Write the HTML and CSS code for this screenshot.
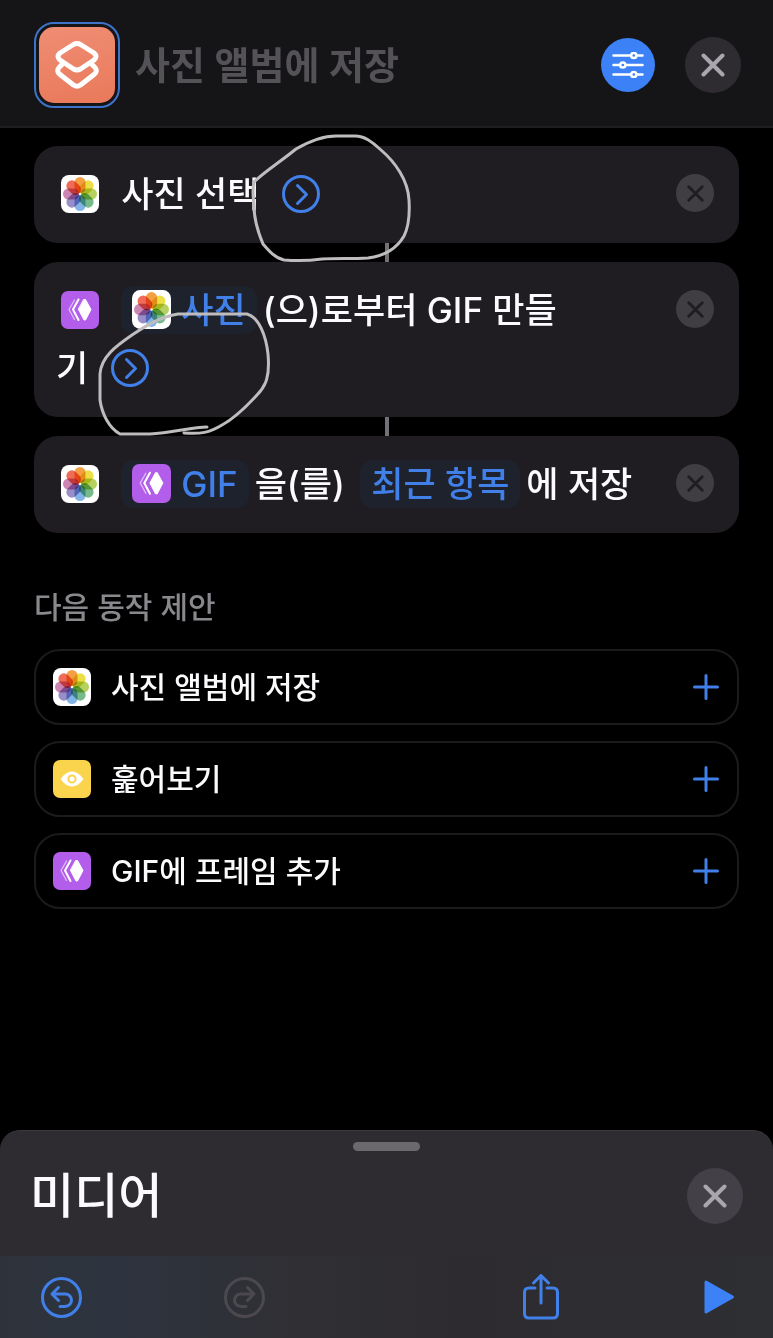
FILE: index.html
```html
<!DOCTYPE html>
<html lang="ko">
<head>
  <meta charset="UTF-8" />
  <meta name="viewport" content="width=device-width, initial-scale=1" />
  <title>사진 앨범에 저장</title>
  <link rel="stylesheet" href="styles.css">
</head>
<body>
  <!-- Shared icons -->
  <svg class="sprite" aria-hidden="true">
    <symbol id="photos" viewBox="0 0 38 38">
      <rect width="38" height="38" rx="8" fill="#fff" />
      <g class="petals">
        <rect x="13.500" y="2" width="11" height="16" rx="5.500" fill="#f3a043" />
        <rect x="13.500" y="2" width="11" height="16" rx="5.500" fill="#ecdf45" transform="rotate(45 19 19)" />
        <rect x="13.500" y="2" width="11" height="16" rx="5.500" fill="#b5d160" transform="rotate(90 19 19)" />
        <rect x="13.500" y="2" width="11" height="16" rx="5.500" fill="#76ba8c" transform="rotate(135 19 19)" />
        <rect x="13.500" y="2" width="11" height="16" rx="5.500" fill="#82b4e8" transform="rotate(180 19 19)" />
        <rect x="13.500" y="2" width="11" height="16" rx="5.500" fill="#9a8ec8" transform="rotate(225 19 19)" />
        <rect x="13.500" y="2" width="11" height="16" rx="5.500" fill="#cd86b4" transform="rotate(270 19 19)" />
        <rect x="13.500" y="2" width="11" height="16" rx="5.500" fill="#ef6c58" transform="rotate(315 19 19)" />
      </g>
    </symbol>
    <symbol id="gif" viewBox="0 0 38 38">
      <rect width="38" height="38" rx="7" fill="#b35eea" />
      <path d="M23 8.500H24.500L30 18.500L24.500 29H23L17.500 18.500z" fill="#fff" stroke="#fff" stroke-linejoin="round" />
      <path d="M17.500 8.500L12 18.500L17.500 29" fill="none" stroke="#fff" stroke-width="2" />
      <path d="M13.500 9L8 18.500L13.500 28.500" fill="none" stroke="#fff" stroke-width="1.300" opacity="0.600" />
    </symbol>
    <symbol id="eye" viewBox="0 0 38 38">
      <rect width="38" height="38" rx="7" fill="#f9d44c" />
      <path d="M7.500 19C11 14 15 11.500 19 11.500S27 14 30.500 19C27 24 23 26.500 19 26.500S11 24 7.500 19z" fill="#fff" />
      <circle cx="19" cy="19" r="3.600" fill="none" stroke="#f9d44c" stroke-width="2" />
    </symbol>
    <symbol id="chevron" viewBox="0 0 38 38">
      <circle cx="19" cy="19" r="17.500" />
      <path d="M15.500 10.500L24.500 19.500L15.500 28.500" />
    </symbol>
    <symbol id="cross" viewBox="0 0 24 24">
      <path d="M2.500 2.500L21.500 21.500M21.500 2.500L2.500 21.500" />
    </symbol>
    <symbol id="plus" viewBox="0 0 26 26">
      <path d="M13 1.500V24.500M1.500 13H24.500" />
    </symbol>
  </svg>

  <header>
    <button class="app-button" type="button" aria-label="아이콘">
      <svg viewBox="0 0 76 76">
        <path d="M23.500 37L20.500 40q-4 4 .5 7.500L34.500 58q3.500 2.500 7 0L55 47.500q4.500-3.500 .5-7.500L52.500 37" />
        <path d="M34.500 17.500q3.500-2 7 0L55 26q4 3.500 0 7L41.500 42q-3.500 2-7 0L21 33q-4-3.500 0-7z" />
      </svg>
    </button>
    <input class="name" type="text" placeholder="사진 앨범에 저장" aria-label="단축어 이름" />
    <button class="settings" type="button" aria-label="설정">
      <svg viewBox="0 0 32 26">
        <path d="M1.500 3.500H18.500M25 3.500H30.500M1.500 13H7.500M14 13H30.500M1.500 22.500H18.500M25 22.500H30.500" />
        <circle cx="21.800" cy="3.500" r="2.600" />
        <circle cx="10.800" cy="13" r="2.600" />
        <circle cx="21.800" cy="22.500" r="2.600" />
      </svg>
    </button>
    <button class="close" type="button" aria-label="닫기"><svg><use href="#cross" /></svg></button>
  </header>

  <main>
    <section class="actions">
      <div class="card">
        <p><svg class="app-icon"><use href="#photos" /></svg> 사진 <span class="nowrap">선택<button class="more" type="button" aria-label="더 보기"><svg><use href="#chevron" /></svg></button></span></p>
        <button class="remove" type="button" aria-label="삭제"><svg><use href="#cross" /></svg></button>
      </div>
      <div class="card">
        <p><svg class="app-icon"><use href="#gif" /></svg> <button class="pill" type="button"><svg><use href="#photos" /></svg>사진</button>(으)로부터 GIF 만들<span class="nowrap">기<button class="more" type="button" aria-label="더 보기"><svg><use href="#chevron" /></svg></button></span></p>
        <button class="remove" type="button" aria-label="삭제"><svg><use href="#cross" /></svg></button>
      </div>
      <div class="card">
        <p><svg class="app-icon"><use href="#photos" /></svg> <button class="pill" type="button"><svg><use href="#gif" /></svg>GIF</button>을(를) <button class="pill" type="button">최근 항목</button>에 저장</p>
        <button class="remove" type="button" aria-label="삭제"><svg><use href="#cross" /></svg></button>
      </div>
      <!-- Pen marks -->
      <svg class="marks" viewBox="0 128 460 320" aria-hidden="true">
        <path d="M254 182C264 172 280 162 296 149C310 141 324 136 336 136H355C365 136 372 142 381 150C395 162 408 180 409 200C410 216 409 226 404 236C396 250 383 256 368 258C350 259 338 258 322 259C308 261 296 261 284 260C275 258 269 251 263 244C258 232 254 220 254 206C253 194 252 190 254 182" />
        <path d="M207 427C192 427 172 433 150 434H120C109 428 102 414 100 400V374C101 357 116 346 132 335C147 325 160 317 178 314H247C259 317 266 336 268 354C270 376 266 386 257 395C246 407 235 418 222 425C209 433 201 434 184 433" />
      </svg>
    </section>

    <section class="suggestions">
      <h2>다음 동작 제안</h2>
      <button class="suggestion" type="button">
        <svg class="app-icon"><use href="#photos" /></svg>
        <span>사진 앨범에 저장</span>
        <svg class="plus"><use href="#plus" /></svg>
      </button>
      <button class="suggestion" type="button">
        <svg class="app-icon"><use href="#eye" /></svg>
        <span>훑어보기</span>
        <svg class="plus"><use href="#plus" /></svg>
      </button>
      <button class="suggestion" type="button">
        <svg class="app-icon"><use href="#gif" /></svg>
        <span>GIF에 프레임 추가</span>
        <svg class="plus"><use href="#plus" /></svg>
      </button>
    </section>
  </main>

  <section class="sheet">
    <div class="handle"></div>
    <div class="sheet-title">
      <h1>미디어</h1>
      <button class="close" type="button" aria-label="닫기"><svg><use href="#cross" /></svg></button>
    </div>
  </section>

  <footer>
    <div class="history">
      <button type="button" aria-label="실행 취소">
        <svg width="41" height="41" viewBox="0 0 41 41">
          <circle cx="20.500" cy="20.500" r="19" />
          <path d="M17.500 10.500L11 17L17.500 23.500M11.500 17H24C28 17 30.500 20 30.500 23.200S28 29.500 24 29.500H19" />
        </svg>
      </button>
      <button type="button" aria-label="실행 복귀" disabled>
        <svg width="41" height="41" viewBox="0 0 41 41">
          <circle cx="20.500" cy="20.500" r="19" />
          <path d="M23.500 10.500L30 17L23.500 23.500M29.500 17H17C13 17 10.500 20 10.500 23.200S13 29.500 17 29.500H22" />
        </svg>
      </button>
    </div>
    <div class="run">
      <button type="button" aria-label="공유">
        <svg width="36" height="46" viewBox="0 0 36 46">
          <path d="M12 14H6C3 14 1.500 15.500 1.500 18.500V39.500C1.500 42.500 3 44 6 44H30C33 44 34.500 42.500 34.500 39.500V18.500C34.500 15.500 33 14 30 14H24M18 29V2M10.500 9L18 1.500L25.500 9" />
        </svg>
      </button>
      <button class="play" type="button" aria-label="실행">
        <svg width="31" height="36" viewBox="0 0 31 36">
          <path d="M2 3L28.500 18L2 33z" />
        </svg>
      </button>
    </div>
  </footer>
</body>
</html>
```
FILE: styles.css
```css
* {
  box-sizing: border-box;
}

body {
  font-family: Inter, "Noto Sans CJK KR", sans-serif;
  background-color: #000;
  color: #fbfafc;
  margin: 0;
  min-height: 100vh;
  display: flex;
  flex-direction: column;
}

h1, h2, p {
  margin: 0;
}

button {
  background: none;
  border: none;
  padding: 0;
  color: inherit;
  font: inherit;
  cursor: pointer;
}

svg {
  display: block;
  fill: none;
  stroke-linecap: round;
  stroke-linejoin: round;
}

.sprite {
  position: absolute;
  width: 0;
  height: 0;
}

.petals {
  isolation: isolate;
}

.petals rect {
  mix-blend-mode: multiply;
}

header {
  display: flex;
  align-items: center;
  height: 128px;
  padding: 4px 32px 0 34px;
  background-color: #151417;
  border-bottom: 2px solid #1e1e20;
}

.app-button {
  padding: 3px;
  border: 2px solid #3d74c9;
  border-radius: 20px;
}

.app-button svg {
  width: 76px;
  height: 76px;
  border-radius: 15px;
  background: linear-gradient(170deg, #ef8d74, #e9795a);
  stroke: #fff;
  stroke-width: 5;
}

.name {
  flex: 1;
  min-width: 0;
  margin-left: 15px;
  padding: 0;
  border: none;
  outline: none;
  background: none;
  color: #fbfafc;
  font: inherit;
  font-size: 38px;
  font-weight: 600;
  line-height: 56px;
}

.name::placeholder {
  color: #545257;
  opacity: 1;
}

.settings, .close {
  flex: none;
  display: flex;
  align-items: center;
  justify-content: center;
  border-radius: 50%;
}

.settings {
  width: 54px;
  height: 54px;
  margin-right: 30px;
  background-color: #3c81f6;
}

.settings svg {
  width: 32px;
  height: 26px;
  stroke: #fff;
  stroke-width: 2.5;
}

.close {
  width: 56px;
  height: 56px;
  background-color: #2e2c31;
}

.close svg {
  width: 24px;
  height: 24px;
  stroke: #a9a7ad;
  stroke-width: 4;
}

/* Workflow */
.actions {
  position: relative;
  display: flex;
  flex-direction: column;
  gap: 19px;
  padding: 18px 34px 0;
}

.card {
  position: relative;
  display: flex;
  gap: 36px;
  align-items: flex-start;
  padding: 19px 25px 20px 22px;
  border-radius: 24px;
  background-color: #1f1d21;
}

.card + .card::before {
  content: "";
  position: absolute;
  left: 50%;
  bottom: 100%;
  width: 4px;
  height: 19px;
  margin-left: -2px;
  background-color: #737175;
}

.card p {
  flex: 1;
  font-size: 35px;
  font-weight: 500;
  line-height: 58px;
}

.card p svg {
  display: inline-block;
  vertical-align: -6px;
}

.app-icon {
  flex: none;
  width: 38px;
  height: 38px;
}

.card .app-icon {
  margin: 0 13px 0 5px;
}

.nowrap {
  white-space: nowrap;
}

.pill {
  height: 48px;
  margin: 0 6px;
  padding: 0 11px;
  border-radius: 12px;
  background-color: #1d222c;
  color: #4080e8;
  line-height: 48px;
}

.app-icon + .pill {
  margin-left: 0;
}

.pill svg {
  width: 39px;
  height: 39px;
  margin-right: 10px;
}

.more {
  margin-left: 23px;
}

.more svg {
  width: 38px;
  height: 38px;
  stroke: #4080e8;
  stroke-width: 3;
}

.remove {
  display: flex;
  align-items: center;
  justify-content: center;
  width: 38px;
  height: 38px;
  margin-top: 9px;
  border-radius: 50%;
  background-color: #403e43;
}

.remove svg {
  width: 17px;
  height: 17px;
  stroke: #1f1d21;
  stroke-width: 4;
}

.marks {
  position: absolute;
  top: 0;
  left: 0;
  width: 460px;
  height: 320px;
  stroke: #bebcbd;
  stroke-width: 3;
  pointer-events: none;
}

/* Suggestions */
.suggestions {
  display: flex;
  flex-direction: column;
  gap: 16px;
  padding: 50px 34px;
}

.suggestions h2 {
  margin-bottom: 2px;
  color: #8a888d;
  font-size: 30px;
  font-weight: 500;
  line-height: 48px;
}

.suggestion {
  display: flex;
  align-items: center;
  gap: 20px;
  height: 76px;
  padding: 0 18px 0 17px;
  border: 2px solid #1b1b1d;
  border-radius: 26px;
  font-size: 30px;
  font-weight: 500;
  text-align: left;
}

.suggestion span {
  flex: 1;
  padding-bottom: 4px;
}

.plus {
  width: 26px;
  height: 26px;
  stroke: #4080e8;
  stroke-width: 3;
}

/* Bottom sheet */
.sheet {
  margin-top: auto;
  padding: 11px 30px 32px;
  border-top: 1px solid #3a383d;
  border-radius: 20px 20px 0 0;
  background-color: #2e2c31;
}

.handle {
  width: 67px;
  height: 9px;
  margin: 0 auto 17px;
  border-radius: 5px;
  background-color: #6c696e;
}

.sheet-title {
  display: flex;
  align-items: center;
  justify-content: space-between;
}

.sheet h1 {
  font-size: 48px;
  font-weight: 500;
  line-height: 56px;
}

.sheet .close {
  background-color: #434047;
}

footer {
  display: flex;
  align-items: center;
  justify-content: space-between;
  height: 82px;
  padding: 0 38px 0 41px;
  background: linear-gradient(90deg, #2e333b, #2d343f 14%, #302f33 40%, #2d2b30 60%, #2e2f33);
}

footer svg {
  stroke: #4080e8;
  stroke-width: 3;
}

footer button:disabled svg {
  stroke: #4b494d;
}

.history, .run {
  display: flex;
  align-items: center;
}

.history {
  gap: 142px;
}

.run {
  gap: 145px;
}

.play svg {
  fill: #3c81f6;
  stroke: #3c81f6;
}
```
